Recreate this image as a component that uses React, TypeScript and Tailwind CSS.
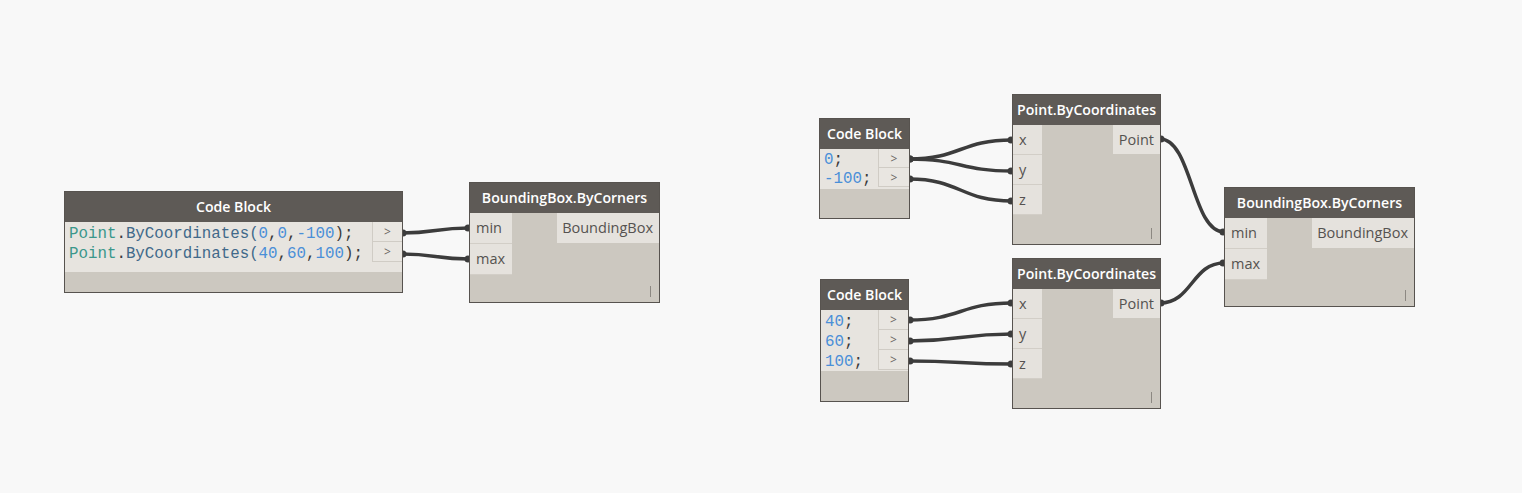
import React from "react";

type Tok = { t: string; c: string };
const P = "text-[#3b978b]";
const F = "text-[#41698a]";
const N = "text-[#4a8fd8]";
const D = "text-[#3a3a3a]";

function Header({ title }: { title: string }) {
  return (
    <div className="bg-[#5e5a56] h-[30px] shrink-0 flex items-center justify-center text-white text-[14.1px] font-semibold font-['Open_Sans','Noto_Sans',sans-serif]">
      {title}
    </div>
  );
}

function CodeBlock({
  pos,
  codeCls,
  lineCls,
  portCls,
  lines,
}: {
  pos: string;
  codeCls: string;
  lineCls: string;
  portCls: string;
  lines: Tok[][];
}) {
  return (
    <div className={`absolute flex flex-col border border-[#57534f] bg-[#ccc8c0] ${pos}`}>
      <Header title="Code Block" />
      <div className={`flex bg-[#e7e4df] shrink-0 ${codeCls}`}>
        <div className="flex-1 pl-[4px] pt-[2px] text-[15.8px] whitespace-pre font-['Liberation_Mono','DejaVu_Sans_Mono',monospace]">
          {lines.map((l, i) => (
            <div key={i} className={lineCls}>
              {l.map((tk, j) => (
                <span key={j} className={tk.c}>
                  {tk.t}
                </span>
              ))}
            </div>
          ))}
        </div>
        <div className={`flex flex-col shrink-0 ${portCls}`}>
          {lines.map((_, i) => (
            <div
              key={i}
              className={`border-l border-b border-[#d0ccc5] bg-[#e9e6e1] flex items-center justify-center text-[#6b6762] text-[12px] font-['Open_Sans',sans-serif] ${lineCls}`}
            >
              &gt;
            </div>
          ))}
        </div>
      </div>
      <div className="flex-1" />
    </div>
  );
}

function FuncNode({
  pos,
  title,
  inputs,
  output,
  inCls,
  outCls,
}: {
  pos: string;
  title: string;
  inputs: string[];
  output: string;
  inCls: string;
  outCls: string;
}) {
  return (
    <div className={`absolute flex flex-col border border-[#57534f] bg-[#ccc8c0] font-['Open_Sans','Noto_Sans',sans-serif] ${pos}`}>
      <Header title={title} />
      <div className="flex justify-between">
        <div className="flex flex-col">
          {inputs.map((s) => (
            <div
              key={s}
              className={`bg-[#e5e2dd] border-b border-[#d2cec7] flex items-center pl-[6px] text-[14.5px] text-[#555250] ${inCls}`}
            >
              {s}
            </div>
          ))}
        </div>
        <div className={`bg-[#e5e2dd] flex items-center justify-end pr-[6px] text-[14.5px] text-[#555250] ${outCls}`}>
          {output}
        </div>
      </div>
      <div className="flex-1 flex items-end justify-end pr-[8px] pb-[5px]">
        <div className="w-[1px] h-[11px] bg-[#8c8882]" />
      </div>
    </div>
  );
}

function wire(x1: number, y1: number, x2: number, y2: number) {
  const d = Math.max(30, (x2 - x1) * 0.5);
  return `M ${x1} ${y1} C ${x1 + d} ${y1}, ${x2 - d} ${y2}, ${x2} ${y2}`;
}

const wires: [number, number, number, number][] = [
  [402, 233, 469, 228],
  [402, 254, 469, 259],
  [909, 159, 1012, 140],
  [909, 159, 1012, 171],
  [909, 179, 1012, 201],
  [909, 320, 1012, 303],
  [909, 341, 1012, 334],
  [909, 361, 1012, 364],
  [1160, 139, 1224, 232],
  [1160, 303, 1224, 263],
];

const cb1: Tok[][] = [
  [
    { t: "Point", c: P },
    { t: ".", c: D },
    { t: "ByCoordinates(", c: F },
    { t: "0", c: N },
    { t: ",", c: D },
    { t: "0", c: N },
    { t: ",", c: D },
    { t: "-100", c: N },
    { t: ");", c: D },
  ],
  [
    { t: "Point", c: P },
    { t: ".", c: D },
    { t: "ByCoordinates(", c: F },
    { t: "40", c: N },
    { t: ",", c: D },
    { t: "60", c: N },
    { t: ",", c: D },
    { t: "100", c: N },
    { t: ");", c: D },
  ],
];
const cb2: Tok[][] = [
  [
    { t: "0", c: N },
    { t: ";", c: D },
  ],
  [
    { t: "-100", c: N },
    { t: ";", c: D },
  ],
];
const cb3: Tok[][] = [
  [
    { t: "40", c: N },
    { t: ";", c: D },
  ],
  [
    { t: "60", c: N },
    { t: ";", c: D },
  ],
  [
    { t: "100", c: N },
    { t: ";", c: D },
  ],
];

export default function App() {
  return (
    <div className="relative w-[1522px] h-[493px] bg-[#f8f8f8] overflow-hidden">
      <svg className="absolute left-0 top-0" width={1522} height={493}>
        {wires.map(([a, b, c, d], i) => (
          <g key={i}>
            <path d={wire(a, b, c, d)} stroke="#3c3c3c" strokeWidth={3.5} fill="none" />
            <circle cx={a + 1} cy={b} r={3.5} fill="#3c3c3c" />
            <circle cx={c - 1} cy={d} r={3.5} fill="#3c3c3c" />
          </g>
        ))}
      </svg>

      <CodeBlock
        pos="left-[64px] top-[191px] w-[339px] h-[102px]"
        codeCls="h-[50px]"
        lineCls="h-[20px] leading-[20px]"
        portCls="w-[30px]"
        lines={cb1}
      />
      <FuncNode
        pos="left-[469px] top-[182px] w-[191px] h-[121px]"
        title="BoundingBox.ByCorners"
        inputs={["min", "max"]}
        output="BoundingBox"
        inCls="w-[42px] h-[31px]"
        outCls="w-[102px] h-[30px]"
      />

      <CodeBlock
        pos="left-[819px] top-[118px] w-[91px] h-[101px]"
        codeCls="h-[40px]"
        lineCls="h-[19px] leading-[19px]"
        portCls="w-[31px]"
        lines={cb2}
      />
      <FuncNode
        pos="left-[1012px] top-[94px] w-[149px] h-[151px]"
        title="Point.ByCoordinates"
        inputs={["x", "y", "z"]}
        output="Point"
        inCls="w-[29px] h-[30px]"
        outCls="w-[47px] h-[29px]"
      />

      <CodeBlock
        pos="left-[820px] top-[279px] w-[89px] h-[123px]"
        codeCls="h-[61px]"
        lineCls="h-[20px] leading-[20px]"
        portCls="w-[30px]"
        lines={cb3}
      />
      <FuncNode
        pos="left-[1012px] top-[258px] w-[149px] h-[151px]"
        title="Point.ByCoordinates"
        inputs={["x", "y", "z"]}
        output="Point"
        inCls="w-[29px] h-[30px]"
        outCls="w-[47px] h-[29px]"
      />

      <FuncNode
        pos="left-[1224px] top-[187px] w-[191px] h-[120px]"
        title="BoundingBox.ByCorners"
        inputs={["min", "max"]}
        output="BoundingBox"
        inCls="w-[42px] h-[31px]"
        outCls="w-[102px] h-[30px]"
      />
    </div>
  );
}
